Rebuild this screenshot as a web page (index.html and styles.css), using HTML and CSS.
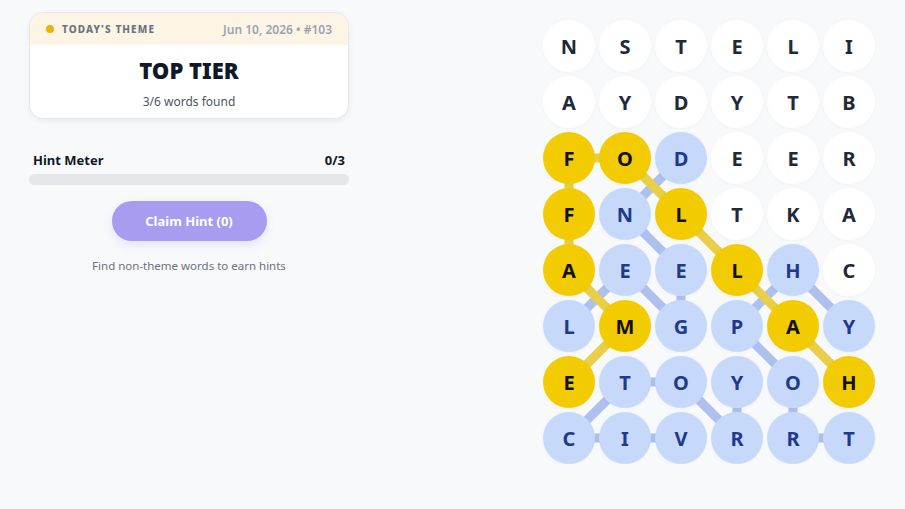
FILE: index.html
```html
<!DOCTYPE html>
<html lang="en">
<head>
    <meta charset="UTF-8">
    <meta name="viewport" content="width=device-width, initial-scale=1.0">
    <title>Strands</title>
    <link rel="stylesheet" href="styles.css">
</head>
<body>
    <div class="page">
        <div class="side">
            <!-- Theme card -->
            <div class="theme-card">
                <div class="theme-head">
                    <span class="theme-label"><span class="dot"></span>TODAY'S THEME</span>
                    <span class="theme-date">Jun 10, 2026 &bull; #103</span>
                </div>
                <div class="theme-body">
                    <h1>TOP TIER</h1>
                    <p>3/6 words found</p>
                </div>
            </div>

            <!-- Hints -->
            <div class="hint-row">
                <span>Hint Meter</span>
                <span>0/3</span>
            </div>
            <div class="hint-bar"><div class="hint-fill" style="width: 0%;"></div></div>
            <button class="claim-btn">Claim Hint (0)</button>
            <p class="hint-note">Find non-theme words to earn hints</p>
        </div>

        <div class="board" id="board">
            <svg class="links" id="links" width="332" height="444"></svg>
        </div>
    </div>

    <script>
        const rows = [
            'NSTELI',
            'AYDYTB',
            'FODEER',
            'FNLTKA',
            'AEELHC',
            'LMGPAY',
            'ETOYOH',
            'CIVRRT'
        ];

        // found words as [row, col] paths
        const spangram = [[6,5],[5,4],[4,3],[3,2],[2,1],[2,0],[3,0],[4,0],[5,1],[6,0]];
        const words = [
            [[5,0],[4,1],[5,2],[4,2],[3,1],[2,2]],
            [[7,2],[7,1],[7,0],[6,1],[6,2],[7,3],[6,3]],
            [[7,5],[7,4],[6,4],[5,3],[4,4],[5,5]]
        ];

        const state = {};
        spangram.forEach(([r, c]) => state[r + '-' + c] = 'gold');
        words.forEach(w => w.forEach(([r, c]) => state[r + '-' + c] = 'blue'));

        const board = document.getElementById('board');
        rows.forEach((row, r) => {
            row.split('').forEach((ch, c) => {
                const cell = document.createElement('div');
                cell.className = 'cell ' + (state[r + '-' + c] || '');
                cell.textContent = ch;
                board.appendChild(cell);
            });
        });

        const links = document.getElementById('links');
        const center = n => 26 + n * 56;
        function drawPath(path, cls) {
            for (let i = 1; i < path.length; i++) {
                const [r1, c1] = path[i - 1];
                const [r2, c2] = path[i];
                const line = document.createElementNS('http://www.w3.org/2000/svg', 'line');
                line.setAttribute('x1', center(c1));
                line.setAttribute('y1', center(r1));
                line.setAttribute('x2', center(c2));
                line.setAttribute('y2', center(r2));
                line.setAttribute('class', cls);
                links.appendChild(line);
            }
        }
        words.forEach(w => drawPath(w, 'link-blue'));
        drawPath(spangram, 'link-gold');
    </script>
</body>
</html>
```

FILE: styles.css
```css
body {
    margin: 0;
    background: #f8f9fb;
    font-family: 'Noto Sans', 'Open Sans', sans-serif;
    color: #111827;
}
.page {
    display: flex;
    justify-content: space-between;
    align-items: flex-start;
    padding: 12px 30px 0 29px;
}
.side {
    width: 320px;
}
.theme-card {
    background: #fff;
    border: 1px solid #e5e7eb;
    border-radius: 14px;
    overflow: hidden;
    box-shadow: 0 2px 6px rgba(0, 0, 0, 0.06);
}
.theme-head {
    display: flex;
    justify-content: space-between;
    align-items: center;
    height: 32px;
    padding: 0 16px 0 16px;
    background: #fcf5e6;
}
.theme-label {
    display: flex;
    align-items: center;
    font-size: 10px;
    font-weight: 800;
    letter-spacing: 1.1px;
    color: #6b7280;
}
.dot {
    width: 8px;
    height: 8px;
    border-radius: 50%;
    background: #eab308;
    margin-right: 8px;
}
.theme-date {
    font-size: 12px;
    font-weight: 600;
    color: #9ca3af;
}
.theme-body {
    text-align: center;
    padding: 10px 0 8px;
}
.theme-body h1 {
    margin: 0;
    font-size: 22px;
    font-weight: 900;
    line-height: 30px;
    color: #111827;
}
.theme-body p {
    margin: 8px 0 0;
    font-size: 12px;
    color: #4b5563;
}
.hint-row {
    display: flex;
    justify-content: space-between;
    margin-top: 32px;
    padding: 0 4px;
    font-size: 13px;
    font-weight: 700;
}
.hint-bar {
    height: 11px;
    margin-top: 5px;
    border-radius: 6px;
    background: #e5e7eb;
    overflow: hidden;
}
.hint-fill {
    height: 100%;
    background: #a78bfa;
}
.claim-btn {
    display: block;
    width: 155px;
    height: 40px;
    margin: 16px auto 0;
    border: none;
    border-radius: 20px;
    background: #a79cef;
    color: #fff;
    font-family: inherit;
    font-size: 13px;
    font-weight: 700;
    box-shadow: 0 4px 10px rgba(120, 100, 220, 0.15);
}
.hint-note {
    margin: 17px 0 0;
    text-align: center;
    font-size: 11.5px;
    color: #6b7280;
}
.board {
    position: relative;
    display: grid;
    grid-template-columns: repeat(6, 52px);
    grid-auto-rows: 52px;
    gap: 4px;
    margin-top: 8px;
}
.links {
    position: absolute;
    left: 0;
    top: 0;
    z-index: 0;
}
.link-blue {
    stroke: #aec0ee;
    stroke-width: 9;
}
.link-gold {
    stroke: #e9cf47;
    stroke-width: 9;
}
.cell {
    position: relative;
    z-index: 1;
    display: flex;
    align-items: center;
    justify-content: center;
    border-radius: 50%;
    background: #fff;
    font-size: 20px;
    font-weight: 700;
    color: #1f2937;
    box-shadow: 0 1px 4px rgba(0, 0, 0, 0.03);
}
.cell.blue {
    background: #c7d9fb;
    color: #1e3a8a;
}
.cell.gold {
    background: #f2cc00;
    color: #111;
}
```
